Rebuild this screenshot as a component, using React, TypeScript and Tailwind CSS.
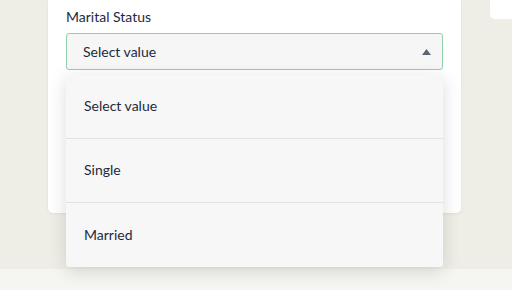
import React from "react";

export default function App() {
  const items = ["Select value", "Single", "Married"];
  return (
    <div
      className="relative w-[512px] h-[290px] overflow-hidden bg-[#efeee6]"
      style={{ fontFamily: "Lato, 'Noto Sans', sans-serif" }}
    >
      <div className="flex h-[269px]">
        <div className="w-[48px] shrink-0" />
        <div className="w-[413px] shrink-0 h-[213px] bg-white rounded-b-[5px] shadow-[0_1px_3px_rgba(0,0,0,0.06)] px-[18px] pt-[9px]">
          <div className="text-[14px] leading-[16px] text-[#1e2a3b]">Marital Status</div>
          <div className="mt-[8px] h-[37px] border border-[#8fd1a6] rounded-[3px] bg-[#f6f6f6] flex items-center justify-between pl-[16px] pr-[11px]">
            <span className="text-[14px] text-[#1e2a3b]">Select value</span>
            <svg width="9" height="6" viewBox="0 0 9 6">
              <path d="M4.5 0 L9 6 L0 6 Z" fill="#5b6675" />
            </svg>
          </div>
        </div>
        <div className="w-[29px] shrink-0" />
        <div className="w-[30px] shrink-0 h-[19px] bg-white rounded-bl-[5px]" />
      </div>
      <div className="h-[21px] bg-[#f5f5f1]" />
      <div className="absolute left-[66px] top-[75px] w-[377px] bg-[#f7f7f7] rounded-b-[3px] shadow-[0_4px_18px_rgba(0,0,0,0.14)]">
        {items.map((t, i) => (
          <div
            key={t}
            className={`h-[64px] flex items-center pl-[18px] pb-[2px] text-[14px] text-[#1e2a3b] ${i < items.length - 1 ? "border-b border-[#e2e2e2]" : ""}`}
          >
            {t}
          </div>
        ))}
      </div>
    </div>
  );
}
